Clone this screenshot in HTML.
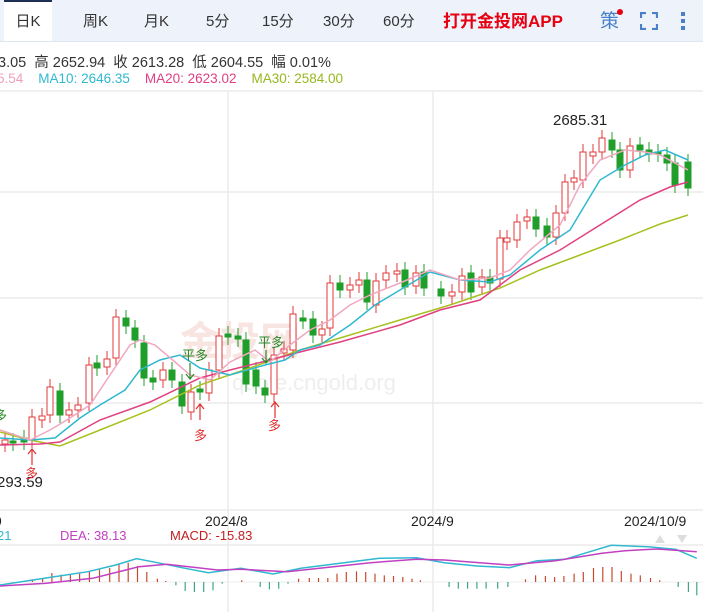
<!DOCTYPE html>
<html><head><meta charset="utf-8"><style>
body{margin:0;width:715px;height:612px;overflow:hidden;background:#fff;font-family:"Liberation Sans","Noto Sans CJK SC",sans-serif;position:relative}
.bar{position:absolute;left:0;top:0;width:703px;height:41px;background:#eef3fb;border-bottom:1px solid #dfe6f0}
.tab{position:absolute;top:0;height:41px;line-height:44px;font-size:15px;color:#333}
.act{background:#fff;border-top:2px solid #1e2f55;box-sizing:border-box;width:48px;left:4px;text-align:center;line-height:40px}
.t{position:absolute;font-size:14px;white-space:nowrap}
</style></head><body>
<div class="bar"></div>
<div class="tab act">日K</div>
<div class="tab" style="left:83px">周K</div>
<div class="tab" style="left:144px">月K</div>
<div class="tab" style="left:206px">5分</div>
<div class="tab" style="left:262px">15分</div>
<div class="tab" style="left:323px">30分</div>
<div class="tab" style="left:383px">60分</div>
<div class="tab" style="left:443px;color:#e60012;font-weight:bold;font-size:17px;line-height:44px">打开金投网APP</div>
<div class="tab" style="left:600px;color:#4a80c8;font-size:19px;line-height:44px">策</div>
<div style="position:absolute;left:617px;top:9px;width:6px;height:6px;border-radius:3px;background:#e60012"></div>
<svg style="position:absolute;left:640px;top:12px" width="18" height="18"><path d="M1 6V1H6M12 1H17V6M17 12V17H12M6 17H1V12" stroke="#4a80c8" stroke-width="2.2" fill="none"/></svg>
<div style="position:absolute;left:681px;top:12px;width:4px;height:4px;background:#4a80c8"></div>
<div style="position:absolute;left:681px;top:19px;width:4px;height:4px;background:#4a80c8"></div>
<div style="position:absolute;left:681px;top:26px;width:4px;height:4px;background:#4a80c8"></div>
<div class="t" style="left:-2px;top:51px;color:#333;font-size:14.5px">3.05 &nbsp;高 2652.94 &nbsp;收 2613.28 &nbsp;低 2604.55 &nbsp;幅 0.01%</div>
<div class="t" style="left:-3px;top:71px;font-size:13.5px"><span style="color:#f0a0b8">5.54</span> &nbsp;&nbsp;&nbsp;<span style="color:#30b8d0">MA10: 2646.35</span> &nbsp;&nbsp;&nbsp;<span style="color:#e04080">MA20: 2623.02</span> &nbsp;&nbsp;&nbsp;<span style="color:#98b820">MA30: 2584.00</span></div>
<svg style="position:absolute;left:0;top:0" width="715" height="612">
<g stroke="#e8e8e8" stroke-width="1.3">
<line x1="0" y1="91" x2="703" y2="91"/><line x1="0" y1="192" x2="703" y2="192"/><line x1="0" y1="298" x2="703" y2="298"/><line x1="0" y1="403" x2="703" y2="403"/><line x1="0" y1="510" x2="703" y2="510"/><line x1="0" y1="545" x2="703" y2="545"/>
<line x1="228" y1="91" x2="228" y2="612"/><line x1="433" y1="91" x2="433" y2="612"/>
</g>
<text x="180" y="355" font-size="40" fill="#f8e4e0" font-weight="bold">金投网</text>
<text x="232" y="390" font-size="22" fill="#eeeeee">quote.cngold.org</text>
<g id="c"></g>
<polyline fill="none" stroke="#a8c020" stroke-width="1.5" points="0,432 30,440 60,446 100,430 150,410 200,385 250,368 300,350 350,335 400,320 450,305 500,288 540,270 580,255 620,240 660,224 688,215"/>
<polyline fill="none" stroke="#e04080" stroke-width="1.5" points="0,445 40,444 60,442 100,420 150,402 200,378 230,370 270,360 300,352 340,342 400,325 440,310 480,300 520,270 560,250 600,225 640,200 670,187 688,182"/>
<polyline fill="none" stroke="#30b8d0" stroke-width="1.5" points="0,438 30,440 55,438 80,418 100,405 125,390 140,370 160,360 180,355 200,368 230,375 265,365 285,360 300,350 320,345 350,325 375,305 400,290 430,272 460,280 490,282 510,275 540,250 570,230 600,180 625,165 645,155 665,150 688,160"/>
<polyline fill="none" stroke="#f0a8c0" stroke-width="1.5" points="0,430 30,440 50,430 70,418 90,405 110,375 130,345 140,340 155,345 175,362 190,375 210,380 230,362 255,350 270,362 290,345 310,330 330,320 350,305 370,295 400,283 430,270 460,280 490,278 510,270 530,250 560,225 580,185 600,160 625,150 645,152 660,155 688,170"/>
<text x="553" y="125" font-size="15" fill="#222">2685.31</text>
<text x="-3" y="487" font-size="15" fill="#222">293.59</text>
<text x="182" y="360" font-size="13" fill="#2a8a2a">平多</text>
<text x="258" y="347" font-size="13" fill="#2a8a2a">平多</text>
<text x="-6" y="420" font-size="13" fill="#2a8a2a">多</text>
<g stroke="#e03030" fill="none" stroke-width="1.2"><path d="M32 465V450M28 454L32 449L36 454"/><path d="M200 420V405M196 409L200 404L204 409"/><path d="M275 418V403M271 407L275 402L279 407"/></g>
<g stroke="#2a8a2a" fill="none" stroke-width="1.2"><path d="M190 363V378M186 374L190 379L194 374"/><path d="M266 350V362M262 358L266 363L270 358"/></g>
<text x="25" y="478" font-size="13" fill="#e03030">多</text>
<text x="194" y="440" font-size="13" fill="#e03030">多</text>
<text x="268" y="430" font-size="13" fill="#e03030">多</text>
<text x="205" y="526" font-size="14" fill="#222">2024/8</text>
<text x="411" y="526" font-size="14" fill="#222">2024/9</text>
<text x="624" y="526" font-size="14" fill="#222">2024/10/9</text>
<text x="-6" y="526" font-size="14" fill="#222">9</text>
<text x="-3" y="540" font-size="13" fill="#30b8d0">21</text>
<text x="60" y="540" font-size="13" fill="#c040c0">DEA: 38.13</text>
<text x="170" y="540" font-size="13" fill="#c02020">MACD: -15.83</text>
<path d="M655 543l5-8 5 8zM677 535l5 8 5-8z" fill="#ddd"/>
<line x1="0" y1="582" x2="703" y2="582" stroke="#eee"/>
<g id="m"></g>
<polyline id="bl" fill="none" stroke="#30b8d0" stroke-width="1.5"/>
<polyline id="ml" fill="none" stroke="#c040c0" stroke-width="1.5"/>
</svg>
<script>
var C=[[5,440,444,1],[13,441,443,0],[24,438,442,0],[32,417,440,1],[42,416,420,1],[50,387,415,1],[60,391,415,0],[69,410,415,1],[78,405,410,1],[89,365,403,1],[97,363,368,0],[107,359,367,1],[116,317,358,1],[126,318,326,0],[135,328,340,0],[144,343,378,0],[153,378,382,0],[163,370,380,1],[172,370,380,0],[182,382,406,0],[191,392,412,1],[200,389,392,0],[209,370,393,1],[219,336,370,1],[228,334,337,0],[238,336,339,0],[246,340,384,0],[256,370,386,0],[265,388,395,0],[274,355,394,1],[284,349,353,1],[293,314,350,1],[303,318,321,0],[313,319,335,0],[322,329,335,1],[330,283,328,1],[340,283,290,0],[350,285,290,1],[359,280,285,1],[367,280,302,0],[376,281,305,1],[386,273,280,1],[397,271,274,1],[405,270,287,0],[416,273,286,1],[424,272,288,0],[441,289,296,0],[452,292,296,1],[462,276,292,1],[471,273,292,0],[482,277,287,1],[490,277,283,0],[500,238,279,1],[507,238,242,1],[517,222,240,1],[527,217,221,1],[536,217,229,0],[547,226,237,0],[556,213,237,1],[565,182,213,1],[574,178,182,1],[583,152,180,1],[593,152,156,1],[602,138,152,1],[612,140,150,0],[620,150,170,0],[630,146,170,1],[640,145,150,0],[649,150,154,0],[658,152,154,0],[667,155,163,0],[675,163,185,0],[688,162,188,0]];
var s='';C.forEach(function(c){var x=c[0],t=c[1],b=c[2],r=c[3],col=r?'#e03a3a':'#1f9e2a',h=Math.max(b-t,2);
s+='<line x1="'+x+'" x2="'+x+'" y1="'+(t-8)+'" y2="'+(b+8)+'" stroke="'+col+'"/>';
s+='<rect x="'+(x-3)+'" y="'+t+'" width="6" height="'+h+'" fill="'+(r?'#fff':col)+'" stroke="'+col+'"/>';});
document.getElementById('c').innerHTML=s;
var H=[[70,8],[92,12],[112,27],[132,22],[152,22],[172,25],[193,33],[215,37],[237,42],[257,55],[277,58],[297,48],[317,30],[340,10],[358,3],[380,-10],[400,-27],[420,-30],[440,-30],[460,-25],[480,-5],[522,5],[562,-15],[582,-22],[602,-20],[622,-5],[645,10],[668,12],[688,12],[708,12],[728,25],[748,30],[770,32],[790,30],[810,25],[830,20],[850,18],[870,15],[890,10],[908,5],[970,-15],[990,-20],[1010,-20],[1030,-20],[1050,-20],[1075,-20],[1097,-15],[1135,8],[1157,20],[1178,18],[1198,15],[1218,18],[1240,25],[1260,30],[1282,42],[1302,45],[1322,45],[1342,33],[1363,25],[1383,20],[1405,12],[1425,5],[1465,-15],[1487,-30],[1505,-40]];
var m='';H.forEach(function(h){var x=(h[0]/2.16).toFixed(1),v=h[1]/3;m+='<line x1="'+x+'" x2="'+x+'" y1="582" y2="'+(582-v)+'" stroke="'+(v>0?'#c8482a':'#3aa880')+'" stroke-width="1.2"/>';});
document.getElementById('m').innerHTML=m;
function P(a){return a.map(function(p){return (p[0]/2.16).toFixed(1)+','+(500+p[1]/3).toFixed(1)}).join(' ')}
document.getElementById('bl').setAttribute('points',P([[0,255],[110,232],[190,215],[250,195],[295,176],[340,188],[400,205],[450,218],[520,205],[590,222],[650,205],[760,185],[820,175],[900,173],[960,188],[1030,198],[1100,203],[1160,182],[1220,178],[1320,136],[1400,140],[1460,148],[1505,175]]));
document.getElementById('ml').setAttribute('points',P([[0,258],[100,250],[200,235],[300,200],[360,193],[470,210],[520,208],[620,215],[720,200],[800,188],[900,178],[960,180],[1100,195],[1200,182],[1300,160],[1350,152],[1420,147],[1505,155]]));
</script>
</body></html>
